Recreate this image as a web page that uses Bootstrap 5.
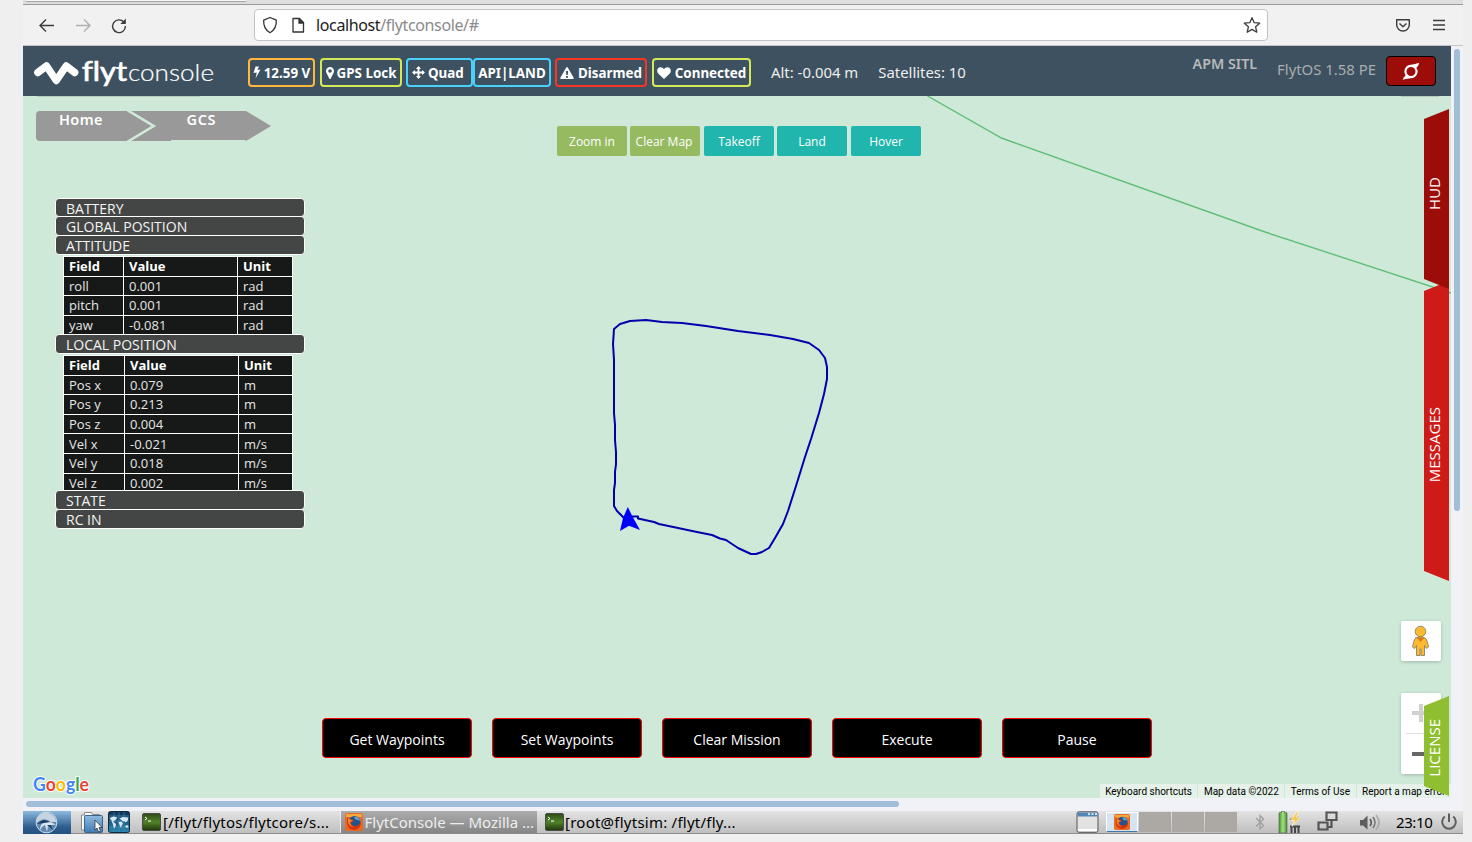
<!DOCTYPE html>
<html lang="en">
<head>
<meta charset="utf-8">
<meta name="viewport" content="width=device-width, initial-scale=1">
<title>FlytConsole</title>
<link rel="stylesheet" href="https://cdn.jsdelivr.net/npm/bootstrap@5.3.0/dist/css/bootstrap.min.css">
<style>
body{background:#efefef;font-family:"Noto Sans","Open Sans",sans-serif;font-size:14px;line-height:1.2;overflow:hidden;height:842px}
svg{display:block;flex:none}
.screen{width:1440px;height:834px;margin-left:23px;background:#f0f2f8}
.tabstrip{height:5px;background:#dedede;border-bottom:1px solid #999}
.tabstrip span{display:block;width:220px;height:1px;margin-left:3px;background:#f6f6f6;box-shadow:0 1px 1px #999}
.toolbar{height:41px;background:#f1f1f1;border-bottom:1px solid #c4c4c8}
.urlbar{width:1014px;height:32px;margin-left:126px;background:#fff;border:1px solid #c2c2c2;border-radius:4px;font-size:16px;color:#8b8b8b}
.urlbar b{font-weight:400;color:#1c1c1c}
.url-t{letter-spacing:-.37px;padding-top:2px}
.page{width:1428px;height:752px}
.topbar{height:50px;background:#3d5160;color:#fff}
.chip{height:29px;border:2px solid;border-radius:4px;font-weight:700;font-size:13.4px;white-space:nowrap}
.chip span,.stat{color:#fff}
.chip span{padding-top:1px}
.c-orange{border-color:#ffb83c}.c-lime{border-color:#d3e956}.c-cyan{border-color:#49d1fc}.c-red{border-color:#fb3525}
.stat{font-size:14.9px;white-space:nowrap;color:#eee}
.power{width:50px;height:30px;background:#9c0c09;border:1px solid #000;border-radius:4px}
.mapbox{height:702px;background:#cee9d7}
.over{position:absolute}
.crumbs{left:13px;top:9px}
.crumb-t{font-size:14.5px;font-weight:600;fill:#fff}
.tools{left:534px;top:30px}
.tool{width:70px;height:30px;border-radius:2px;font-family:"Open Sans",sans-serif;font-size:12px;padding-top:2px;color:#fff;background:#20b5ad;white-space:nowrap}
.tool.olive{background:#96ba5f}
.telemetry{left:32px;top:102px;width:250px}
.bar{height:20px;margin-bottom:-1px;padding-left:10px;background:#444645;border:1px solid #fff;border-radius:4px;color:#f4f4f4;font-family:"Open Sans",sans-serif;font-size:14px;line-height:20px;position:relative}
.grid-wrap{overflow:hidden;padding:2px 0 0 8px}
.grid-wrap table{width:230px;border-collapse:collapse;table-layout:fixed;font-family:"Open Sans",sans-serif;font-size:13px;line-height:17px;color:#e6e6e6;background:#171918}
.grid-wrap td,.grid-wrap th{height:19.6px;padding:1px 0 0 5px;border:1px solid #fff}
.grid-wrap th{color:#fff}
.mission{left:299px;top:622px;gap:20px}
.mission .go{width:150px;height:40px;background:#000;border:1px solid #f00;border-radius:4px;color:#fff;font-family:"Open Sans",sans-serif;font-size:14px;padding-top:4px}
.side{right:2px;width:25px;padding-right:5px;color:#fff;font-family:"Open Sans",sans-serif;font-size:15px}
.side span{writing-mode:vertical-rl;transform:rotate(180deg);line-height:25px}
.hud{top:13px;height:180px;background:#9c0c09;z-index:3;clip-path:polygon(0 10px,100% 0,100% 100%,0 170px)}
.msgs{top:185px;height:300px;background:#ce1b18;z-index:2;clip-path:polygon(0 10px,100% 0,100% 100%,0 290px)}
.lic{top:600px;height:100px;background:#8fbf30;z-index:2;clip-path:polygon(0 10px,100% 0,100% 100%,0 90px)}
.ctl{right:10px;width:40px;background:#fff;border-radius:2px;box-shadow:0 1px 4px -1px rgba(0,0,0,.35)}
.attrib{right:0;bottom:0;height:14px;font:10px/14px Roboto,sans-serif;color:#000;gap:1px}
.attrib span{background:#e6f2e9;padding:2px 5.500px 0;line-height:12px;white-space:nowrap}
.vtrack{width:12px;height:752px;padding:3px 3px 0}
.vtrack div{width:6px;height:462px;border-radius:3px;background:#a2bdd8}
.htrack{height:13px;padding:3px 0 0 3px}
.htrack div{width:873px;height:6px;border-radius:3px;background:#a2bdd8}
.taskbar{height:23px;background:linear-gradient(#e3e3e3,#bfbfbf);border-bottom:1px solid #8c8c8c;color:#000;font-size:15px}
.menu-btn{width:48px;height:23px;background:linear-gradient(#8db9e0,#2d5d8c 70%,#225280)}
.task{height:22px;white-space:nowrap;line-height:22px}
.task.on{width:197px;background:linear-gradient(#ababab,#868686);color:#eee;border-left:1px solid #eee}
.tk1{letter-spacing:.24px}
.tk3{letter-spacing:.24px}
.clock{letter-spacing:-.4px}
.desk{width:32px;height:20px;background:#aca9a4}
.desk.on{background:#d4e4f1;border:1px solid #fff;border-bottom:1px solid #4477a8}
</style>
</head>
<body>
<svg width="0" height="0" class="position-absolute">
  <defs>
    <linearGradient id="gTerm" x2="0" y2="1"><stop stop-color="#2d4a18"/><stop offset=".5" stop-color="#51842a"/><stop offset="1" stop-color="#20360e"/></linearGradient>
    <linearGradient id="gFolder" x2="0" y2="1"><stop stop-color="#8fbbe0"/><stop offset="1" stop-color="#3f7cb4"/></linearGradient>
    <linearGradient id="gGlobe" x2="0" y2="1"><stop stop-color="#0d3153"/><stop offset="1" stop-color="#2c86ae"/></linearGradient>
    <linearGradient id="gBat"><stop stop-color="#3c9722"/><stop offset=".5" stop-color="#a9df8b"/><stop offset="1" stop-color="#3c9722"/></linearGradient>
    <symbol id="term" viewBox="0 0 19 18"><rect x=".5" y=".5" width="18" height="17" rx="1.5" fill="url(#gTerm)" stroke="#4a4d46"/><path d="M3 4l2 1.500-2 1.500M6 8h3" stroke="#fff" fill="none"/></symbol>
    <symbol id="fox" viewBox="0 0 18 18"><rect width="18" height="18" rx="2" fill="#ea6a20"/><rect x="1" y="1" width="16" height="3" fill="#f6a83c"/><circle cx="9.500" cy="9" r="6" fill="#20558f"/><path d="M9 4q5-1 6 4-3-2-4-1z" fill="#5ba7da"/><path d="M2 4q1 2 3 2 3 0 4 2l-3 1q0 4 4 4 4 0 6-4 0 7-7 8-7-1-7-8z" fill="#d3330e"/><path d="M3 5l3 2 2 1-3 1q0 4 4 5-5 0-6-5z" fill="#f48b21"/></symbol>
  </defs>
</svg>

<div class="screen d-flex flex-column overflow-hidden">
  <div class="tabstrip"><span></span></div>

  <div class="toolbar d-flex align-items-center">
    <svg width="105" height="24" viewBox="0 0 105 24" fill="none" stroke="#3c3c3c" stroke-width="1.400">
      <path d="M31 12.500H17.500M23 6.500l-6 6 6 6"/>
      <path d="M53 12.500h13.500M61 6.500l6 6-6 6" stroke="#b0b0b0"/>
      <path d="M100.800 9A6.400 6.400 0 1 0 102.400 13"/><path d="M102.800 5.500v5.500h-5.500z" fill="#3c3c3c" stroke="none"/>
    </svg>
    <div class="urlbar d-flex align-items-center">
      <svg width="61" height="24" viewBox="0 0 61 24" fill="none" stroke="#333" stroke-width="1.300">
        <path d="M15 4.500l6.300 2.700c.4 5.800-1.500 9.800-6.300 12.500C10.200 17 8.300 13 8.700 7.200z" stroke-linejoin="round"/>
        <path d="M38 5.500h6.500l4 4v9.500H38z" stroke-linejoin="round"/><path d="M44 5.500v4.500h4.500" fill="#333"/>
      </svg>
      <span class="flex-grow-1 url-t"><b>localhost</b>/flytconsole/#</span>
      <svg width="29" height="24" viewBox="0 0 29 24" fill="none" stroke="#3c3c3c" stroke-width="1.300" stroke-linejoin="round"><path d="M14 4.700l2.200 5 5.500.5-4.100 3.600 1.200 5.400-4.800-2.800-4.800 2.800 1.200-5.400-4.100-3.600 5.500-.5z"/></svg>
    </div>
    <svg class="ms-auto" width="76" height="24" viewBox="0 0 76 24" fill="none" stroke="#3c3c3c" stroke-width="1.400">
      <path d="M9.700 6.700h12.600v5a6.300 6.300 0 0 1-12.600 0zM12.500 10.500l3.500 3.300 3.500-3.300" stroke-linejoin="round"/>
      <path d="M46 7.500h12M46 12h12M46 16.500h12"/>
    </svg>
  </div>

  <div class="d-flex">
    <main class="page">
      <nav class="topbar d-flex">
        <svg width="225" height="50" viewBox="23 46 225 50">
          <path d="M37.800 72.500L46.500 66l9.800 14.500L66.200 66l8.500 6.500" fill="none" stroke="#fff" stroke-width="7.400" stroke-linecap="round" stroke-linejoin="round"/>
          <text x="82" y="81" font-family="Lato" font-weight="400" font-size="26" fill="#fff" stroke="#fff" stroke-width=".7" textLength="45" lengthAdjust="spacingAndGlyphs" style="font-variant-ligatures:none">flyt</text>
          <text x="128" y="81" font-family="Lato" font-weight="300" font-size="24" fill="#fff" stroke="#fff" stroke-width=".2" textLength="86" lengthAdjust="spacingAndGlyphs">console</text>
        </svg>
        <div class="d-flex" style="padding-top:12px">
          <div class="chip c-orange d-flex align-items-center justify-content-center" style="width:67px;gap:3px">
            <svg width="8" height="13" viewBox="0 0 8 13"><path d="M2.500.5H6L4.500 4l3-.5L2.500 12.500 3.800 6.500.5 7z" fill="#fff"/></svg><span>12.59 V</span></div>
          <div class="chip c-lime d-flex align-items-center justify-content-center" style="width:82px;gap:3px;margin-left:5px">
            <svg width="8" height="12" viewBox="0 0 8 12"><path fill-rule="evenodd" d="M4 0a4 4 0 0 1 3.500 6L4.500 12h-1L.5 6A4 4 0 0 1 4 0zm0 2.200a1.800 1.800 0 1 0 0 3.600 1.800 1.800 0 0 0 0-3.600z" fill="#fff"/></svg><span>GPS Lock</span></div>
          <div class="chip c-cyan d-flex align-items-center" style="width:67px;gap:3px;margin-left:4px;padding-left:4px">
            <svg width="13" height="13" viewBox="0 0 13 13"><path d="M6.500 1v11M1 6.500h11" stroke="#fff" stroke-width="1.800"/><path d="M6.500 0L9 3H4zM6.500 13L9 10H4zM0 6.500L3 4v5zM13 6.500L10 4v5z" fill="#fff"/></svg><span>Quad</span></div>
          <div class="chip c-cyan d-flex align-items-center justify-content-center" style="width:78px"><span>API|LAND</span></div>
          <div class="chip c-red d-flex align-items-center justify-content-center" style="width:92px;gap:4px;margin-left:4px">
            <svg width="14" height="12" viewBox="0 0 13 12" preserveAspectRatio="none"><path fill-rule="evenodd" d="M5.800.5q.7-1 1.400 0L12.800 11q.2 1-.8 1H1Q0 12 .2 11zM5.500 4l.3 4h1.400l.3-4zM5.600 9v1.700h1.800V9z" fill="#fff"/></svg><span>Disarmed</span></div>
          <div class="chip c-lime d-flex align-items-center justify-content-center" style="width:99px;gap:4px;margin-left:5px">
            <svg width="14" height="12" viewBox="0 0 14 12"><path d="M7 12L1.200 6.500C-1 4 .5.300 3.500.300 5 .300 6.300 1.100 7 2.300 7.700 1.100 9 .300 10.500.300c3 0 4.500 3.700 2.300 6.200z" fill="#fff"/></svg><span>Connected</span></div>
        </div>
        <span class="stat" style="margin:18px 0 0 20px">Alt: -0.004 m</span>
        <span class="stat" style="margin:18px 0 0 20px">Satellites: 10</span>
        <span class="stat ms-auto" style="margin-top:9px;color:#b9babb;font-size:14.3px;font-weight:600">APM SITL</span>
        <span class="stat" style="margin:15px 10px 0 20px;color:#a9adb0">FlytOS 1.58 PE</span>
        <span class="power d-flex align-items-center justify-content-center" style="margin:10px 15px 0 0"><svg width="18" height="18" viewBox="0 0 18 18"><path fill-rule="evenodd" fill="#fff" d="M17.300.8Q16.500 4 14.300 5.700A6.600 6.600 0 0 1 9 16.200Q5.500 16.300 .7 17.800 1.500 15 3.700 13.300A6.600 6.600 0 0 1 9 2.800Q13 2.500 17.300.8zM9 5a4.500 4.500 0 1 0 0 9 4.500 4.500 0 0 0 0-9z"/></svg></span>
      </nav>

      <section class="mapbox position-relative overflow-hidden">
        <svg width="1428" height="702" viewBox="23 96 1428 702" fill="none">
          <path d="M927.500 96L1001.500 138 1265 232 1451 293" stroke="#5fbf78" stroke-width="1.400"/>
          <path d="M37 96.500H200M1401 96.500h38" stroke="#b5ccbd"/>
          <path d="M627 519L623 517 617 511 614 506V490L615 483V472L616 464V452L615 440V425L614 413V360L613 344 614 329 620 324 630 321 646 320 662 322 682 323 706 326 738 331 770 335 793 339 809 343 819 350 825 358 827 367V379L824 394 819 413 811 439 805 457 796 486 788 511 783 524 775 538 769 548 762 552 756 554H751L738 548 726 540 720 538.500 712 535 697 532 659 524 654 522 638 518.500V516.500H629" stroke="#0000ac" stroke-width="2" stroke-linejoin="round"/>
          <path d="M627.800 507L633 517.500 640 530 629 525.800 620 531 623 518z" fill="#00f"/>
        </svg>

        <svg class="over crumbs" width="236" height="42" viewBox="0 -6 236 42">
          <path d="M4 0H91L117 15 91 30H4Q0 30 0 26V4Q0 0 4 0z" fill="#999"/>
          <path d="M95 0H210L235 15 210 30 209 29H135V30H95L120 15z" fill="#999"/>
          <path d="M91.800 -.5L117.500 15 91.800 30.500" fill="none" stroke="#cee9d7" stroke-width="2.500"/>
          <text class="crumb-t" x="23" y="14" textLength="43.500">Home</text>
          <text class="crumb-t" x="150.500" y="14" textLength="29">GCS</text>
        </svg>

        <div class="over tools d-flex">
          <span class="tool olive d-flex align-items-center justify-content-center">Zoom in</span>
          <span class="tool olive d-flex align-items-center justify-content-center" style="margin-left:3px;padding-right:2px">Clear Map</span>
          <span class="tool d-flex align-items-center justify-content-center ms-1">Takeoff</span>
          <span class="tool d-flex align-items-center justify-content-center" style="margin-left:3px">Land</span>
          <span class="tool d-flex align-items-center justify-content-center ms-1">Hover</span>
        </div>

        <div class="over telemetry">
          <div class="bar" style="height:19px">BATTERY</div>
          <div class="bar">GLOBAL POSITION</div>
          <div class="bar">ATTITUDE</div>
          <div class="grid-wrap" style="height:80px">
            <table>
              <colgroup><col style="width:60px"><col style="width:114px"><col></colgroup>
              <tr><th>Field</th><th>Value</th><th>Unit</th></tr>
              <tr><td>roll</td><td>0.001</td><td>rad</td></tr>
              <tr><td>pitch</td><td>0.001</td><td>rad</td></tr>
              <tr><td>yaw</td><td>-0.081</td><td>rad</td></tr>
            </table>
          </div>
          <div class="bar">LOCAL POSITION</div>
          <div class="grid-wrap" style="height:137px">
            <table>
              <colgroup><col style="width:61px"><col style="width:114px"><col></colgroup>
              <tr><th>Field</th><th>Value</th><th>Unit</th></tr>
              <tr><td>Pos x</td><td>0.079</td><td>m</td></tr>
              <tr><td>Pos y</td><td>0.213</td><td>m</td></tr>
              <tr><td>Pos z</td><td>0.004</td><td>m</td></tr>
              <tr><td>Vel x</td><td>-0.021</td><td>m/s</td></tr>
              <tr><td>Vel y</td><td>0.018</td><td>m/s</td></tr>
              <tr><td>Vel z</td><td>0.002</td><td>m/s</td></tr>
            </table>
          </div>
          <div class="bar">STATE</div>
          <div class="bar">RC IN</div>
        </div>

        <div class="over mission d-flex">
          <span class="go d-flex align-items-center justify-content-center">Get Waypoints</span>
          <span class="go d-flex align-items-center justify-content-center">Set Waypoints</span>
          <span class="go d-flex align-items-center justify-content-center">Clear Mission</span>
          <span class="go d-flex align-items-center justify-content-center">Execute</span>
          <span class="go d-flex align-items-center justify-content-center">Pause</span>
        </div>

        <div class="over side hud d-flex align-items-center justify-content-center" style="padding-bottom:12px"><span>HUD</span></div>
        <div class="over side msgs d-flex align-items-center justify-content-center" style="padding-top:27px"><span>MESSAGES</span></div>
        <div class="over side lic d-flex align-items-center justify-content-center" style="padding-top:4px"><span>LICENSE</span></div>

        <div class="over ctl" style="top:525px;height:40px">
          <svg width="40" height="40" viewBox="0 0 40 40"><g fill="#fbbb2c" stroke="#8b7f6a" stroke-width=".9"><path d="M14.500 17q5-3 9.500 0 2 1 2.500 5l1 4-2 1.500-2-3V34.500h-3.500V28h-1v6.500h-3.500V24.500l-2 3-2-1.500 1-4q.500-4 2.500-5z"/><circle cx="19.500" cy="10.500" r="5.300"/></g><path d="M15.500 16.500h8l-4 4.500z" fill="#e0761f"/></svg>
        </div>
        <div class="over ctl" style="top:597px;height:81px">
          <svg width="40" height="81" viewBox="0 0 40 81"><path d="M11 20h18M20 11v18" stroke="#d0d0d0" stroke-width="4"/><path d="M5 40.500h30" stroke="#e0e0e0"/><path d="M11 61h18" stroke="#666" stroke-width="4"/></svg>
        </div>

        <svg class="over" style="left:8px;top:676px" width="62" height="26" viewBox="0 0 62 26">
          <g font-family="Lato" font-size="19">
            <text x="2" y="18.500" font-weight="700" textLength="56" lengthAdjust="spacingAndGlyphs" stroke="#fff" stroke-width="2" paint-order="stroke"><tspan fill="#4285f4">G</tspan><tspan fill="#ea4335">o</tspan><tspan fill="#fbbc05">o</tspan><tspan fill="#4285f4">g</tspan><tspan fill="#34a853">l</tspan><tspan fill="#ea4335">e</tspan></text>
          </g>
        </svg>

        <div class="over attrib d-flex"><span>Keyboard shortcuts</span><span>Map data ©2022</span><span>Terms of Use</span><span>Report a map error</span></div>
      </section>
    </main>
    <div class="vtrack"><div></div></div>
  </div>

  <div class="htrack"><div></div></div>

  <footer class="taskbar d-flex">
    <div class="menu-btn d-flex justify-content-center">
      <svg width="24" height="23" viewBox="0 0 24 23"><circle cx="11.500" cy="11.500" r="10.300" fill="#5e87b0" stroke="#d5e0ea" stroke-width="1"/><path d="M1.500 11Q2 2 11.500 1.500 20 3 21.500 11L16 11Q9 5 1.500 12z" fill="#c6d4e1"/><path d="M2 12Q8 7 14 10.500l7 3-5 .5 3 6-6-5-1 6-2-7q-3 1-5 5 0-5 3-7-3-1-6 0z" fill="#d9e3ec"/><path d="M2 13Q8 6 15 11L9 12zM12 14l7 6-3-6z" fill="#163f67"/></svg>
    </div>
    <svg style="margin-left:10px" width="51" height="23" viewBox="0 0 51 23">
      <path d="M.5 19V4h3V1.500h7l1 2h7V19z" fill="#fafafa" stroke="#888"/>
      <rect x="3.500" y="4.500" width="18" height="17" rx="1" fill="url(#gFolder)" stroke="#35658f"/>
      <path d="M14 9v10l2-2 1.500 4 2-1-1.500-3.500h3z" fill="#fff" stroke="#333" stroke-width=".8"/>
      <rect x="27.500" y=".5" width="21" height="21" rx="2" fill="url(#gGlobe)" stroke="#0b2a43"/><path d="M28 5h20M28 10h20M28 16h20M33 1v20M38 1v20M43 1v20" stroke="#4b95bd" stroke-width=".6"/>
      <path d="M28.500 7l4-1.500 4 1-2.500 3-2 .5 1 1.500 2 1.500-.5 2.500-1.500 2-1-4-1.500-4zM38.500 7.500l3-1.500 6 .5-1 3.500-2 1.500-1-1.500-1.500.5zM37.500 11l3-.5 1.500 2-1.500 2.500-.5 2-1.500-3zM44 15l2.500-1 1 2-2 1z" fill="#d7e9f5"/>
    </svg>
    <div class="task d-flex align-items-center" style="margin-left:10px;width:198px"><svg width="19" height="18"><use href="#term"/></svg><span class="tk1" style="margin-left:2px">[/flyt/flytos/flytcore/s...</span></div>
    <div class="task on d-flex align-items-center" style="padding-left:4px"><svg width="18" height="18"><use href="#fox"/></svg><span class="tk2" style="margin-left:1.500px">FlytConsole — Mozilla ...</span></div>
    <div class="task d-flex align-items-center" style="padding-left:8px"><svg width="19" height="18"><use href="#term"/></svg><span class="tk3" style="margin-left:1px">[root@flytsim: /flyt/fly...</span></div>
    <svg class="ms-auto" width="30" height="23" viewBox="0 0 30 23"><rect x="1" y=".8" width="21" height="20.500" rx="2" fill="#e2e2e2" stroke="#555"/><path d="M1.500 1.500h20v4h-20z" fill="#5185b6"/><path d="M12 3h2M15.500 3h2M19 3h2" stroke="#fff" stroke-width="1.500"/><path d="M2 19h19" stroke="#fff" stroke-width="2"/></svg>
    <div class="d-flex" style="gap:1px;padding-top:1px">
      <div class="desk on d-flex justify-content-center"><svg width="16" height="16" style="margin-top:1px"><use href="#fox"/></svg></div><div class="desk"></div><div class="desk"></div><div class="desk"></div>
    </div>
    <svg width="159" height="23" viewBox="1237 811 159 23" fill="none">
      <path d="M1256 818l7.500 7.500-3.500 3.500V815.500l3.500 3.500-7.500 7.500" stroke="#a0a0a0" stroke-width="1.300"/>
      <path d="M1279 813.500q0-1 1-1h1.500v-1.500h3v1.500h1.500q1 0 1 1V833h-8z" fill="url(#gBat)" stroke="#666" stroke-width=".7"/>
      <path d="M1290 820q4-3 10-2" stroke="#777" stroke-width="2"/><path d="M1290 826.500h10M1291.500 826v7M1295 826v7M1298.500 826v7" stroke="#444" stroke-width="2"/><path d="M1297 811.500l-6.500 9h4l-2.500 6 8.500-9h-4l2-6z" fill="#f8c94a" stroke="#fff" stroke-width=".6"/>
      <path d="M1326.500 812.500h10v7.500h-10zM1318.500 822.500h9v7h-9zM1331.500 820v7h-4" stroke="#555" stroke-width="2.200"/>
      <path d="M1360 820h3l4.500-4.500v14L1363 825.500h-3z" fill="#5d5d5d"/><path d="M1370 819q2.500 3.500 0 7" stroke="#5d5d5d" stroke-width="1.700"/><path d="M1373 817q4 5.500 0 11" stroke="#777" stroke-width="1.700"/><path d="M1376 815q6 7.500 0 15" stroke="#aaa" stroke-width="1.700"/>
    </svg>
    <span class="task clock" style="width:37px">23:10</span>
    <svg width="30" height="23" viewBox="0 0 30 23" fill="none" stroke="#5d5d5d" stroke-width="2"><path d="M11.800 5.500a6.800 6.800 0 1 0 8.400 0M16 2.500V11"/></svg>
  </footer>
</div>
<script src="https://cdn.jsdelivr.net/npm/bootstrap@5.3.0/dist/js/bootstrap.bundle.min.js"></script>
</body>
</html>
